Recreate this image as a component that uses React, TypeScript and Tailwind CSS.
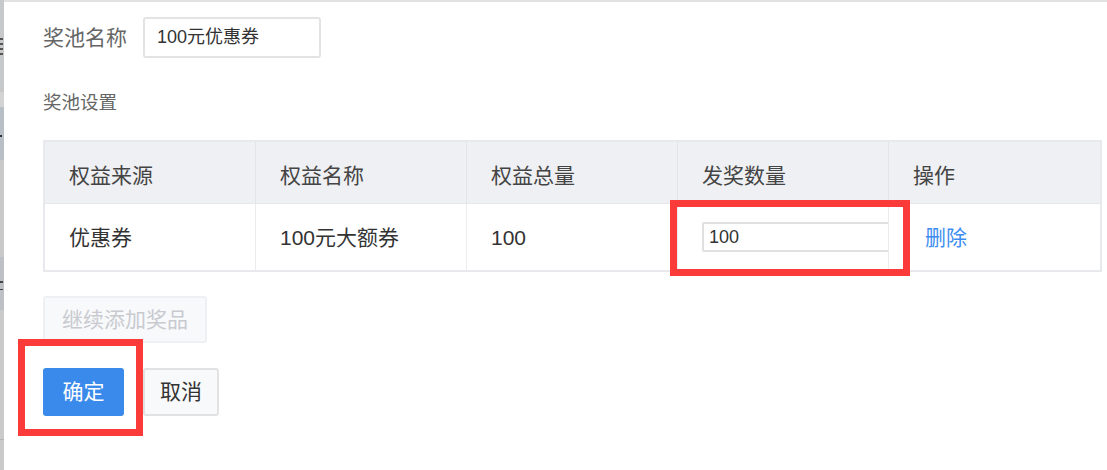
import React from 'react'

const font = { fontFamily: '"Liberation Sans", "Noto Sans CJK SC", sans-serif' }

const headers = ['权益来源', '权益名称', '权益总量', '发奖数量', '操作']

function Strip() {
    return (
        <div className="w-[4px] h-full flex flex-col shrink-0">
            <div className="h-[92px] bg-[#c6c8ca] flex flex-col pt-[38px]">
                <div className="h-[2px] w-[3px] bg-[#555]" />
                <div className="h-[3px]" />
                <div className="h-[2px] w-[3px] bg-[#555]" />
                <div className="h-[3px]" />
                <div className="h-[2px] w-[3px] bg-[#555]" />
                <div className="h-[3px]" />
                <div className="h-[2px] w-[3px] bg-[#555]" />
            </div>
            <div className="h-[15px] bg-[#d3d3d3]" />
            <div className="h-[53px] bg-[#b8bfc7] flex flex-col pt-[28px]">
                <div className="h-[2px] w-[2px] bg-[#333]" />
            </div>
            <div className="h-[97px] bg-[#c9c9c9]" />
            <div className="h-[53px] bg-[#bdc1c5] flex flex-col pt-[24px]">
                <div className="h-[2px] w-[3px] bg-[#444]" />
                <div className="h-[6px]" />
                <div className="h-[1px] w-[3px] bg-[#444]" />
            </div>
            <div className="h-[130px] bg-[#cacaca] border-b border-[#b5b5b5]" />
            <div className="flex-1 bg-[#cacaca]" />
        </div>
    )
}

export default function App() {
    return (
        <div className="relative w-[1107px] h-[470px] flex bg-white overflow-hidden" style={font}>
            <Strip />
            <div className="flex-1 border-t-2 border-[#e2e2e2] pl-[39px] pt-[15px]">
                <div className="flex items-center">
                    <span className="w-[100px] text-[21px] leading-[28px] text-[#666]">奖池名称</span>
                    <div className="w-[178px] h-[41px] border-2 border-[#e3e3e3] rounded-[3px] flex items-center pl-[12px] text-[18px] text-[#333]">
                        100元优惠券
                    </div>
                </div>

                <div className="mt-[33px] text-[18.5px] leading-[24px] text-[#666]">奖池设置</div>

                <div className="mt-[25px] w-[1059px] border-2 border-[#e8e9ec]">
                    <div className="grid grid-cols-5 h-[61px] bg-[#eff0f3]">
                        {headers.map((h, i) => (
                            <div
                                key={h}
                                className={`flex items-center pl-[24px] pt-[6px] text-[21px] text-[#444] ${i < 4 ? 'border-r border-[#e4e5e8]' : ''}`}
                            >
                                {h}
                            </div>
                        ))}
                    </div>
                    <div className="grid grid-cols-5 h-[67px] border-t border-[#e6e7ea] text-[21px] text-[#333]">
                        <div className="flex items-center pl-[24px] pt-[2px] border-r border-[#ececee]">优惠券</div>
                        <div className="flex items-center pl-[24px] pt-[2px] border-r border-[#ececee]">100元大额券</div>
                        <div className="flex items-center pl-[24px] pt-[2px] border-r border-[#ececee]">100</div>
                        <div className="flex items-center pl-[24px] border-r border-[#ececee] overflow-hidden">
                            <div className="shrink-0 w-[220px] h-[30px] border-2 border-[#e0e0e0] rounded-[2px] flex items-center pl-[5px] text-[18px] text-[#333]">
                                100
                            </div>
                        </div>
                        <div className="flex items-center pl-[36px] pt-[2px] text-[#3d8df0]">删除</div>
                    </div>
                </div>

                <button className="mt-[24px] w-[164px] h-[47px] border-2 border-[#eef0f3] bg-[#f8f9fb] rounded-[3px] text-[21px] text-[#c8cad0]">
                    继续添加奖品
                </button>

                <div className="mt-[25px] flex gap-[19px]">
                    <button className="w-[81px] h-[48px] bg-[#3a8aeb] rounded-[3px] text-[21px] text-white">确定</button>
                    <button className="w-[76px] h-[48px] border-2 border-[#e2e2e2] bg-[#f8f9fa] rounded-[3px] text-[21px] text-[#333]">取消</button>
                </div>
            </div>

            <div className="absolute left-[670px] top-[200px] w-[240px] h-[76px] border-[7px] border-[#fb3a3a]" />
            <div className="absolute left-[18px] top-[339px] w-[125px] h-[97px] border-[7px] border-[#fb3a3a]" />
        </div>
    )
}
